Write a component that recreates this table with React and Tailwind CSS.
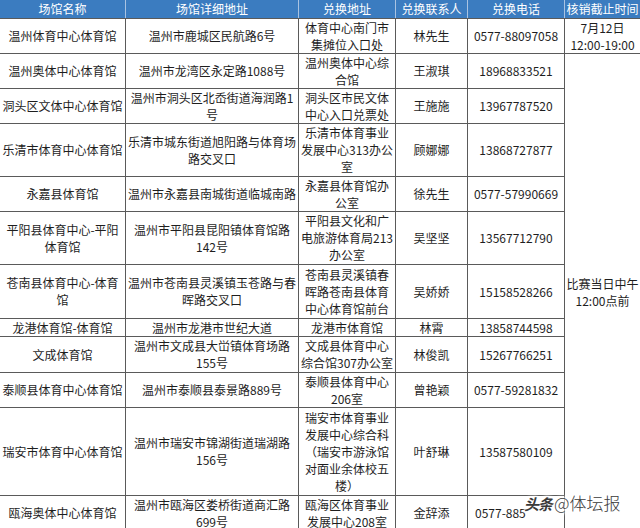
import React from 'react';

const HEAD = ['场馆名称', '场馆详细地址', '兑换地址', '兑换联系人', '兑换电话', '核销截止时间'];

// each row: [height, name lines, address lines, exchange lines, contact, phone]
const ROWS = [
    [35, ['温州体育中心体育馆'], ['温州市鹿城区民航路6号'], ['体育中心南门市', '集摊位入口处'], '林先生', '0577-88097058'],
    [35, ['温州奥体中心体育馆'], ['温州市龙湾区永定路1088号'], ['温州奥体中心综', '合馆'], '王淑琪', '18968833521'],
    [35, ['洞头区文体中心体育馆'], ['温州市洞头区北岙街道海润路1', '号'], ['洞头区市民文体', '中心入口兑票处'], '王施施', '13967787520'],
    [53, ['乐清市体育中心体育馆'], ['乐清市城东街道旭阳路与体育场', '路交叉口'], ['乐清市体育事业', '发展中心313办公', '室'], '顾娜娜', '13868727877'],
    [35, ['永嘉县体育馆'], ['温州市永嘉县南城街道临城南路'], ['永嘉县体育馆办', '公室'], '徐先生', '0577-57990669'],
    [53, ['平阳县体育中心-平阳', '体育馆'], ['温州市平阳县昆阳镇体育馆路', '142号'], ['平阳县文化和广', '电旅游体育局213', '办公室'], '吴坚坚', '13567712790'],
    [54, ['苍南县体育中心-体育', '馆'], ['温州市苍南县灵溪镇玉苍路与春', '晖路交叉口'], ['苍南县灵溪镇春', '晖路苍南县体育', '中心体育馆前台'], '吴娇娇', '15158528266'],
    [16, ['龙港体育馆-体育馆'], ['温州市龙港市世纪大道'], ['龙港市体育馆'], '林霄', '13858744598'],
    [36, ['文成体育馆'], ['温州市文成县大峃镇体育场路', '155号'], ['文成县体育中心', '综合馆307办公室'], '林俊凯', '15267766251'],
    [35, ['泰顺县体育中心体育馆'], ['温州市泰顺县泰景路889号'], ['泰顺县体育中心', '206室'], '曾艳颖', '0577-59281832'],
    [88, ['瑞安市体育中心体育馆'], ['温州市瑞安市锦湖街道瑞湖路', '156号'], ['瑞安市体育事业', '发展中心综合科', '（瑞安市游泳馆', '对面业余体校五', '楼）'], '叶舒琳', '13587580109'],
    [34, ['瓯海奥体中心体育馆'], ['温州市瓯海区娄桥街道商汇路', '699号'], ['瓯海区体育事业', '发展中心208室'], '金辞添', '0577-885'],
];

const HEIGHTS = {
    16: 'h-[16px]', 34: 'h-[34px]', 35: 'h-[35px]', 36: 'h-[36px]', 53: 'h-[53px]', 54: 'h-[54px]', 88: 'h-[88px]'
};

const Lines = ({ lines }) => lines.map((l, i) => <div key={i}>{l}</div>);

const cell = 'border border-[#5a5a5a] px-0 py-0 text-center align-middle whitespace-nowrap';

export default function App() {
    return (
        <div className="relative w-[640px] h-[528px] overflow-hidden bg-white text-[12px] leading-[17px] text-[#1e1e1e]"
            style={{ fontFamily: '"Noto Sans CJK SC", "Noto Sans", sans-serif' }}>
            <table className="w-[641px] table-fixed border-collapse -ml-px">
                <colgroup>
                    <col className="w-[126px]" />
                    <col className="w-[173px]" />
                    <col className="w-[97px]" />
                    <col className="w-[72px]" />
                    <col className="w-[97px]" />
                    <col className="w-[76px]" />
                </colgroup>
                <thead>
                    <tr className="h-[18px] bg-[#3b7cc0] text-white">
                        {HEAD.map(h => (
                            <th key={h} className="border border-[#a9c3e2] border-t-0 border-b-[#5a5a5a] p-0 font-normal text-center whitespace-nowrap leading-[16px]">
                                {h}
                            </th>
                        ))}
                    </tr>
                </thead>
                <tbody>
                    {ROWS.map(([h, name, addr, ex, person, phone], i) => (
                        <tr key={i} className={HEIGHTS[h]}>
                            <td className={cell}><Lines lines={name} /></td>
                            <td className={cell}><Lines lines={addr} /></td>
                            <td className={cell}><Lines lines={ex} /></td>
                            <td className={cell}>{person}</td>
                            <td className={i === 11 ? `${cell} text-left pl-[7px]` : cell}>{phone}</td>
                            {i === 0 && (
                                <td className={cell}><Lines lines={['7月12日', '12:00-19:00']} /></td>
                            )}
                            {i === 1 && (
                                <td rowSpan={11} className={cell}><Lines lines={['比赛当日中午', '12:00点前']} /></td>
                            )}
                        </tr>
                    ))}
                </tbody>
            </table>

            {/* watermark */}
            <div className="absolute left-[524px] top-[494px] flex items-baseline gap-[2px] text-[#3a3a3a]"
                style={{ textShadow: '0 0 2px #fff, 0 0 3px #fff, 0 0 4px #fff, 1px 1px 3px #fff, -1px -1px 3px #fff' }}>
                <span className="text-[15px] italic font-bold tracking-[-1px]">头条</span>
                <span className="text-[17px] font-light">@体坛报</span>
            </div>
        </div>
    );
}
